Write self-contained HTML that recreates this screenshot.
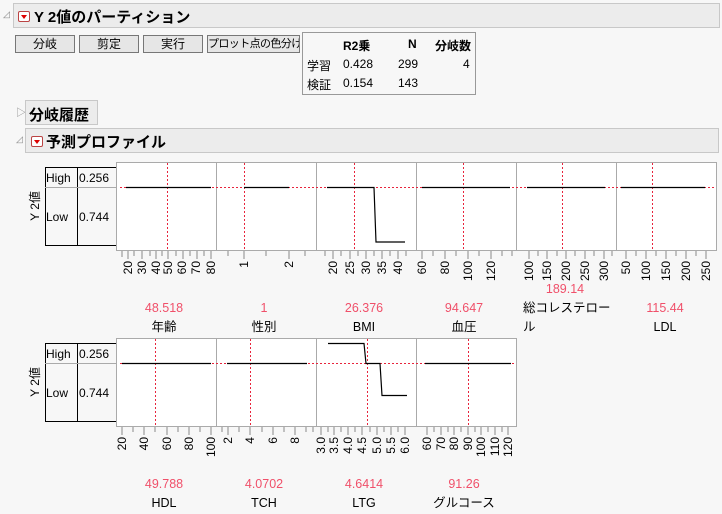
<!DOCTYPE html>
<html><head><meta charset="utf-8"><style>
body{margin:0;width:722px;height:514px;background:#f7f7f7;font-family:"Liberation Sans","Noto Sans CJK JP",sans-serif;position:relative;overflow:hidden;font-size:12px;color:#000}
.a{position:absolute}
.bar{position:absolute;background:#ececec;border:1px solid #c8c8c8;box-sizing:border-box;font-weight:bold;font-size:15px}
.btn{position:absolute;top:35px;height:18px;background:#e6e6e6;border:1px solid #777;box-sizing:border-box;text-align:center;font-size:12px;line-height:16px;white-space:nowrap;overflow:hidden}
.rb{position:absolute;width:12px;height:11px;background:#fff;border:1px solid #b44;box-sizing:border-box;border-radius:2px}
.rb:after{content:"";position:absolute;left:2px;top:3px;border-left:3px solid transparent;border-right:3px solid transparent;border-top:4px solid #d00}
</style></head><body>
<div class="a" style="left:3px;top:9px;font-size:9px;color:#888">◿</div>
<div class="bar" style="left:13px;top:3px;width:707px;height:25px"><div class="rb" style="left:4px;top:7px"></div><span class="a" style="left:20px;top:2px">Y 2値のパーティション</span></div>
<div class="btn" style="left:15px;width:60px">分岐</div>
<div class="btn" style="left:79px;width:60px">剪定</div>
<div class="btn" style="left:143px;width:60px">実行</div>
<div class="btn" style="left:207px;width:93px;font-size:11px;letter-spacing:-0.6px">プロット点の色分け</div>
<div class="a" style="left:302px;top:32px;width:174px;height:63px;border:1px solid #999;box-sizing:border-box;background:#f7f7f7"></div>
<div class="a" style="left:343px;top:37px;font-weight:bold">R2乗</div>
<div class="a" style="left:408px;top:37px;font-weight:bold">N</div>
<div class="a" style="left:435px;top:37px;font-weight:bold">分岐数</div>
<div class="a" style="left:307px;top:57px">学習</div><div class="a" style="left:343px;top:57px">0.428</div><div class="a" style="left:398px;top:57px">299</div><div class="a" style="left:463px;top:57px">4</div>
<div class="a" style="left:307px;top:76px">検証</div><div class="a" style="left:343px;top:76px">0.154</div><div class="a" style="left:398px;top:76px">143</div>
<div class="a" style="left:16px;top:104px;font-size:10px;color:#888">▷</div>
<div class="bar" style="left:25px;top:100px;width:73px;height:25px"><span class="a" style="left:3px;top:3px">分岐履歴</span></div>
<div class="a" style="left:16px;top:134px;font-size:9px;color:#888">◿</div>
<div class="bar" style="left:25px;top:128px;width:694px;height:25px"><div class="rb" style="left:5px;top:7px"></div><span class="a" style="left:20px;top:2px">予測プロファイル</span></div>

<svg class="a" style="left:0;top:0" width="722" height="514" font-family="Liberation Sans, Noto Sans CJK JP, sans-serif" font-size="12">
<g fill="none" stroke="#000">
<rect x="45.5" y="167.5" width="71" height="78"/><line x1="77.5" y1="167" x2="77.5" y2="246"/><line x1="45" y1="187.5" x2="116" y2="187.5" stroke="#aaa"/>
<rect x="45.5" y="343.5" width="71" height="78"/><line x1="77.5" y1="343" x2="77.5" y2="422"/><line x1="45" y1="363.5" x2="116" y2="363.5" stroke="#aaa"/>
</g>
<g font-size="12">
<text x="46" y="182">High</text><text x="79" y="182">0.256</text><text x="46" y="221">Low</text><text x="79" y="221">0.744</text>
<text x="46" y="358">High</text><text x="79" y="358">0.256</text><text x="46" y="397">Low</text><text x="79" y="397">0.744</text>
<text transform="translate(39,206) rotate(-90)" text-anchor="middle">Y 2値</text>
<text transform="translate(39,382) rotate(-90)" text-anchor="middle">Y 2値</text>
</g>
<g fill="#fff" stroke="#aaa">
<rect x="116.5" y="162.5" width="600" height="88"/>
<rect x="116.5" y="338.5" width="400" height="88"/>
</g>
<g stroke="#aaa"><line x1="216.5" y1="162" x2="216.5" y2="251"/><line x1="316.5" y1="162" x2="316.5" y2="251"/><line x1="416.5" y1="162" x2="416.5" y2="251"/><line x1="516.5" y1="162" x2="516.5" y2="251"/><line x1="616.5" y1="162" x2="616.5" y2="251"/>
<line x1="216.5" y1="338" x2="216.5" y2="427"/><line x1="316.5" y1="338" x2="316.5" y2="427"/><line x1="416.5" y1="338" x2="416.5" y2="427"/></g>
<g stroke="#e8243c" stroke-dasharray="2,2">
<line x1="167.5" y1="163" x2="167.5" y2="250"/><line x1="244.5" y1="163" x2="244.5" y2="250"/><line x1="354.5" y1="163" x2="354.5" y2="250"/><line x1="463.5" y1="163" x2="463.5" y2="250"/><line x1="562.5" y1="163" x2="562.5" y2="250"/><line x1="652.5" y1="163" x2="652.5" y2="250"/>
<line x1="155.5" y1="339" x2="155.5" y2="426"/><line x1="250.5" y1="339" x2="250.5" y2="426"/><line x1="367.5" y1="339" x2="367.5" y2="426"/><line x1="468.5" y1="339" x2="468.5" y2="426"/>
<line x1="120" y1="187.5" x2="716" y2="187.5"/><line x1="120" y1="363.5" x2="516" y2="363.5"/>
</g>
<g stroke="#000" fill="none" stroke-width="1.2">
<line x1="126" y1="187.5" x2="211" y2="187.5"/><line x1="244" y1="187.5" x2="289" y2="187.5"/>
<polyline points="327,187.5 374,187.5 376,242 405,242"/>
<line x1="422" y1="187.5" x2="510" y2="187.5"/><line x1="527" y1="187.5" x2="605" y2="187.5"/><line x1="621" y1="187.5" x2="705" y2="187.5"/>
<line x1="122" y1="363.5" x2="211" y2="363.5"/><line x1="227" y1="363.5" x2="307" y2="363.5"/>
<polyline points="328,343.5 364,343.5 366,363.5 380,363.5 382,395.5 407,395.5"/>
<line x1="425" y1="363.5" x2="511" y2="363.5"/>
</g>
<g stroke="#888">
<path d="M122 251v6M128 251v8M134 251v5M142 251v8M150 251v5M156 251v8M162 251v5M168 251v8M176 251v5M183 251v8M190 251v5M197 251v8M204 251v5M211 251v8
M228 251v5M244 251v8M266 251v5M289 251v8M305 251v5
M325 251v5M333 251v8M341 251v5M350 251v8M358 251v5M366 251v8M374 251v5M382 251v8M390 251v5M398 251v8M406 251v5
M422 251v8M433 251v5M445 251v8M456 251v5M468 251v8M479 251v5M491 251v8M502 251v5M512 251v5
M529 251v8M538 251v5M547 251v8M557 251v5M566 251v8M575 251v5M585 251v8M594 251v5M604 251v8M612 251v5
M626 251v8M636 251v5M646 251v8M656 251v5M666 251v8M676 251v5M686 251v8M696 251v5M706 251v8
M122 427v8M133 427v5M144 427v8M155 427v5M167 427v8M178 427v5M189 427v8M200 427v5M211 427v8
M222 427v5M228 427v8M239 427v5M250 427v8M262 427v5M273 427v8M284 427v5M295 427v8M306 427v5M313 427v5
M321 427v8M328 427v5M334 427v8M341 427v5M348 427v8M355 427v5M362 427v8M370 427v5M377 427v8M384 427v5M391 427v8M398 427v5M405 427v8
M427 427v8M434 427v5M441 427v8M448 427v5M454 427v8M461 427v5M468 427v8M475 427v5M481 427v8M488 427v5M495 427v8M502 427v5M508 427v8"/>
</g>
<g font-size="12" text-anchor="end" fill="#000">
<text transform="translate(132,261) rotate(-90)">20</text><text transform="translate(146,261) rotate(-90)">30</text><text transform="translate(160,261) rotate(-90)">40</text><text transform="translate(172,261) rotate(-90)">50</text><text transform="translate(186,261) rotate(-90)">60</text><text transform="translate(200,261) rotate(-90)">70</text><text transform="translate(215,261) rotate(-90)">80</text>
<text transform="translate(248,261) rotate(-90)">1</text><text transform="translate(293,261) rotate(-90)">2</text>
<text transform="translate(337,261) rotate(-90)">20</text><text transform="translate(354,261) rotate(-90)">25</text><text transform="translate(370,261) rotate(-90)">30</text><text transform="translate(386,261) rotate(-90)">35</text><text transform="translate(402,261) rotate(-90)">40</text>
<text transform="translate(426,261) rotate(-90)">60</text><text transform="translate(449,261) rotate(-90)">80</text><text transform="translate(472,261) rotate(-90)">100</text><text transform="translate(495,261) rotate(-90)">120</text>
<text transform="translate(533,261) rotate(-90)">100</text><text transform="translate(551,261) rotate(-90)">150</text><text transform="translate(570,261) rotate(-90)">200</text><text transform="translate(589,261) rotate(-90)">250</text><text transform="translate(608,261) rotate(-90)">300</text>
<text transform="translate(630,261) rotate(-90)">50</text><text transform="translate(650,261) rotate(-90)">100</text><text transform="translate(670,261) rotate(-90)">150</text><text transform="translate(690,261) rotate(-90)">200</text><text transform="translate(710,261) rotate(-90)">250</text>
<text transform="translate(126,437) rotate(-90)">20</text><text transform="translate(148,437) rotate(-90)">40</text><text transform="translate(171,437) rotate(-90)">60</text><text transform="translate(193,437) rotate(-90)">80</text><text transform="translate(215,437) rotate(-90)">100</text>
<text transform="translate(232,437) rotate(-90)">2</text><text transform="translate(254,437) rotate(-90)">4</text><text transform="translate(277,437) rotate(-90)">6</text><text transform="translate(299,437) rotate(-90)">8</text>
<text transform="translate(325,437) rotate(-90)">3.0</text><text transform="translate(338,437) rotate(-90)">3.5</text><text transform="translate(352,437) rotate(-90)">4.0</text><text transform="translate(366,437) rotate(-90)">4.5</text><text transform="translate(381,437) rotate(-90)">5.0</text><text transform="translate(395,437) rotate(-90)">5.5</text><text transform="translate(409,437) rotate(-90)">6.0</text>
<text transform="translate(431,437) rotate(-90)">60</text><text transform="translate(445,437) rotate(-90)">70</text><text transform="translate(458,437) rotate(-90)">80</text><text transform="translate(472,437) rotate(-90)">90</text><text transform="translate(485,437) rotate(-90)">100</text><text transform="translate(499,437) rotate(-90)">110</text><text transform="translate(512,437) rotate(-90)">120</text>
</g>
<g font-size="12.5" text-anchor="middle" fill="#f0506a">
<text x="164" y="312">48.518</text><text x="264" y="312">1</text><text x="364" y="312">26.376</text><text x="464" y="312">94.647</text><text x="565" y="293">189.14</text><text x="665" y="312">115.44</text>
<text x="164" y="488">49.788</text><text x="264" y="488">4.0702</text><text x="364" y="488">4.6414</text><text x="464" y="488">91.26</text>
</g>
<g font-size="12.5" text-anchor="middle" fill="#000">
<text x="164" y="331">年齢</text><text x="264" y="331">性別</text><text x="364" y="331">BMI</text><text x="464" y="331">血圧</text><text x="523" y="312" text-anchor="start">総コレステロー</text><text x="523" y="331" text-anchor="start">ル</text><text x="665" y="331">LDL</text>
<text x="164" y="507">HDL</text><text x="264" y="507">TCH</text><text x="364" y="507">LTG</text><text x="464" y="507">グルコース</text>
</g>
</svg>
</body></html>
